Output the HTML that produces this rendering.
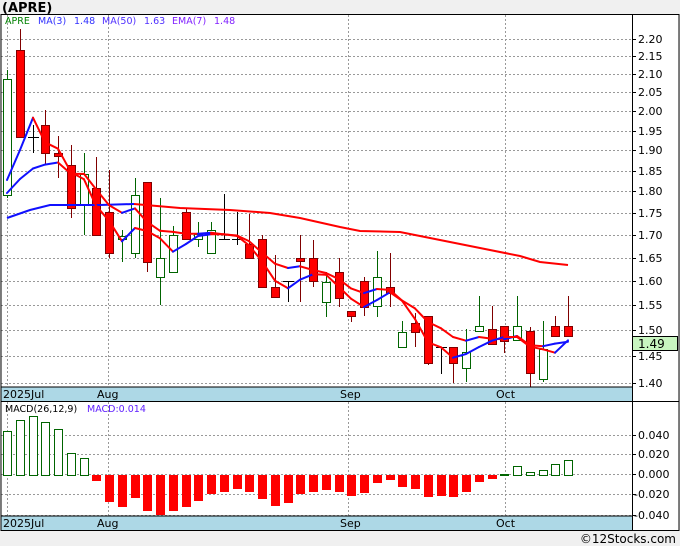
<!DOCTYPE html>
<html><head><meta charset="utf-8"><style>
html,body{margin:0;padding:0;background:#f0f0f0;width:680px;height:546px;overflow:hidden;font-family:"DejaVu Sans",sans-serif}
svg{display:block}
</style></head><body>
<svg id="s" width="680" height="546" xmlns="http://www.w3.org/2000/svg" font-family="DejaVu Sans, sans-serif">
<rect x="0" y="0" width="680" height="546" fill="#f0f0f0"/>
<text x="2" y="12" font-size="13" font-weight="bold" fill="#000">(APRE)</text>
<rect x="1" y="14" width="678" height="516" fill="#fff"/>
<g id="g"></g>
<rect x="1" y="387" width="631" height="14" fill="#add8e6"/>
<rect x="1" y="516" width="631" height="14" fill="#add8e6"/>
<line x1="1" y1="387" x2="632" y2="387" stroke="#000"/>
<line x1="1" y1="401.5" x2="679" y2="401.5" stroke="#000"/>
<line x1="1" y1="516" x2="632" y2="516" stroke="#000"/>
<rect x="1" y="14.5" width="678" height="516" fill="none" stroke="#000"/>
<line x1="632.5" y1="14" x2="632.5" y2="530" stroke="#000"/>
<g font-size="11" fill="#000">
<text x="3" y="398">2025Jul</text><text x="97" y="398">Aug</text><text x="340" y="398">Sep</text><text x="496" y="398">Oct</text>
<text x="3" y="527">2025Jul</text><text x="97" y="527">Aug</text><text x="340" y="527">Sep</text><text x="496" y="527">Oct</text>
</g>
<g font-size="9.5">
<text x="5" y="24" fill="#008000">APRE</text>
<text x="38" y="24" fill="#3030ff">MA(3)</text><text x="74" y="24" fill="#3030ff">1.48</text>
<text x="102" y="24" fill="#5030ff">MA(50)</text><text x="144" y="24" fill="#5030ff">1.63</text>
<text x="172" y="24" fill="#8020ff">EMA(7)</text><text x="214" y="24" fill="#8020ff">1.48</text>
<text x="5" y="412" fill="#000">MACD(26,12,9)</text>
<text x="87" y="412" fill="#6020ff">MACD:0.014</text>
</g>
<rect x="632.5" y="336.5" width="45" height="14" fill="#c8f5c0" stroke="#000"/>
<text x="638" y="348" font-size="12" fill="#000">1.49</text>
<text x="676" y="543" font-size="12" fill="#000" text-anchor="end">©12Stocks.com</text>
</svg>
<script>
var g=document.getElementById('g'),h='';
function Y(p){return 383-762*Math.log(p/1.4);}
[7,108,348,505].forEach(function(x){h+='<line x1="'+x+'.5" y1="15" x2="'+x+'.5" y2="387" stroke="#999" stroke-dasharray="2,2"/>';h+='<line x1="'+x+'.5" y1="402" x2="'+x+'.5" y2="516" stroke="#999" stroke-dasharray="2,2"/>';});
for(var i=0;i<17;i++){var p=1.40+0.05*i,y=Math.round(Y(p));h+='<line x1="1" y1="'+y+'.5" x2="632" y2="'+y+'.5" stroke="#999" stroke-dasharray="2,2"/>';h+='<line x1="632" y1="'+y+'.5" x2="636" y2="'+y+'.5" stroke="#000"/>';h+='<text x="638" y="'+(y+4)+'" font-size="11">'+p.toFixed(2)+'</text>';}
[[435,'0.040'],[454,'0.020'],[474,'0.000'],[494,'-0.020'],[515,'-0.040']].forEach(function(a){h+='<line x1="1" y1="'+a[0]+'.5" x2="632" y2="'+a[0]+'.5" stroke="#999" stroke-dasharray="2,2"/>';h+='<line x1="632" y1="'+a[0]+'.5" x2="636" y2="'+a[0]+'.5" stroke="#000"/>';h+='<text x="'+(a[1][0]=='-'?634:638)+'" y="'+(a[0]+4)+'" font-size="11">'+a[1]+'</text>';});
var C=[['g',79,195,70,198],['r',50,137,29,137],['c',137,137,125,153],['r',125,153,110,165],['r',153,156,136,178],['r',165,208,145,218],['g',174,205,153,235],['r',188,235,157,235],['r',212,253,170,258],['g',236,239,230,262],['g',195,253,178,258],['r',182,262,182,272],['g',258,277,198,305],['g',235,272,226,272],['r',212,239,208,239],['g',234,239,222,247],['g',230,253,222,253],['c',239,239,194,239],['c',239,239,212,245],['r',244,258,214,258],['r',239,287,235,287],['r',287,297,255,297],['c',281,281,281,302],['r',258,261,235,302],['r',258,281,240,287],['g',282,302,272,317],['r',272,298,258,307],['r',311,316,311,322],['r',281,307,277,316],['g',277,306,251,317],['r',287,293,253,307],['g',332,347,321,347],['r',323,332,313,347],['r',316,363,316,365],['c',347,347,347,374],['r',347,363,347,383],['g',352,368,329,382],['g',326,331,296,331],['r',329,344,306,344],['r',326,341,326,353],['g',326,340,296,340],['r',331,373,327,387],['g',349,379,321,382],['r',326,336,316,336],['r',326,336,296,336]];
var X=function(i){return Math.round(7+12.75*i);},cl=[];
C.forEach(function(c,i){var x=X(i);var col=c[0]=='g'?'#006400':(c[0]=='r'?'#800000':'#000');
h+='<line x1="'+x+'.5" y1="'+c[3]+'" x2="'+x+'.5" y2="'+c[4]+'" stroke="'+col+'"/>';
if(c[0]=='c'){h+='<line x1="'+(x-5)+'" y1="'+c[1]+'.5" x2="'+(x+6)+'" y2="'+c[1]+'.5" stroke="#000"/>';cl.push(c[1]);}
else{var hh=Math.max(c[2]-c[1],2);h+='<rect x="'+(x-4)+'.5" y="'+c[1]+'.5" width="8" height="'+hh+'" fill="'+(c[0]=='g'?'#fff':'#f00')+'" stroke="'+col+'"/>';cl.push(c[0]=='g'?c[1]:c[2]);}});
h+='<polyline points="7,218 30,210 50,205 100,205 134,204" fill="none" stroke="#1010ff" stroke-width="2"/>';
h+='<polyline points="134,204 180,208 230,210 270,213 300,218 340,227 360,231 400,232 440,240 480,248 520,256 540,262 568,265" fill="none" stroke="#f00" stroke-width="2"/>';
// EMA7
var e=193,E=[];for(var i=0;i<cl.length;i++){if(i>0)e=cl[i]*0.25+e*0.75;E.push(e);}
for(var i=1;i<E.length;i++){h+='<line x1="'+X(i-1)+'" y1="'+E[i-1].toFixed(1)+'" x2="'+X(i)+'" y2="'+E[i].toFixed(1)+'" stroke="'+(E[i]<E[i-1]-0.3?'#1010ff':'#f00')+'" stroke-width="2" stroke-linecap="round"/>';}
// MA3
var all=[227,234].concat(cl),m=[];for(var i=2;i<all.length;i++){m.push((all[i]+all[i-1]+all[i-2])/3);}
for(var i=1;i<m.length;i++){h+='<line x1="'+X(i-1)+'" y1="'+m[i-1].toFixed(1)+'" x2="'+X(i)+'" y2="'+m[i].toFixed(1)+'" stroke="'+(m[i]<m[i-1]?'#1010ff':'#f00')+'" stroke-width="2" stroke-linecap="round"/>';}
var M=[431,420,416,422,429,453,458,481,502,507,498,511,515,511,507,501,494,492,489,492,499,506,503,494,492,490,492,496,493,483,480,487,489,497,496,497,492,482,479,474,466,472,470,464,460];
M.forEach(function(v,i){var x=X(i);if(v<475){h+='<rect x="'+(x-4)+'.5" y="'+v+'.5" width="8" height="'+Math.max(475-v,1)+'" fill="#fff" stroke="#006400"/>';}else{h+='<rect x="'+(x-4)+'" y="475" width="9" height="'+(v-475)+'" fill="#f00"/>';}});
g.innerHTML=h;
</script>
</body></html>
